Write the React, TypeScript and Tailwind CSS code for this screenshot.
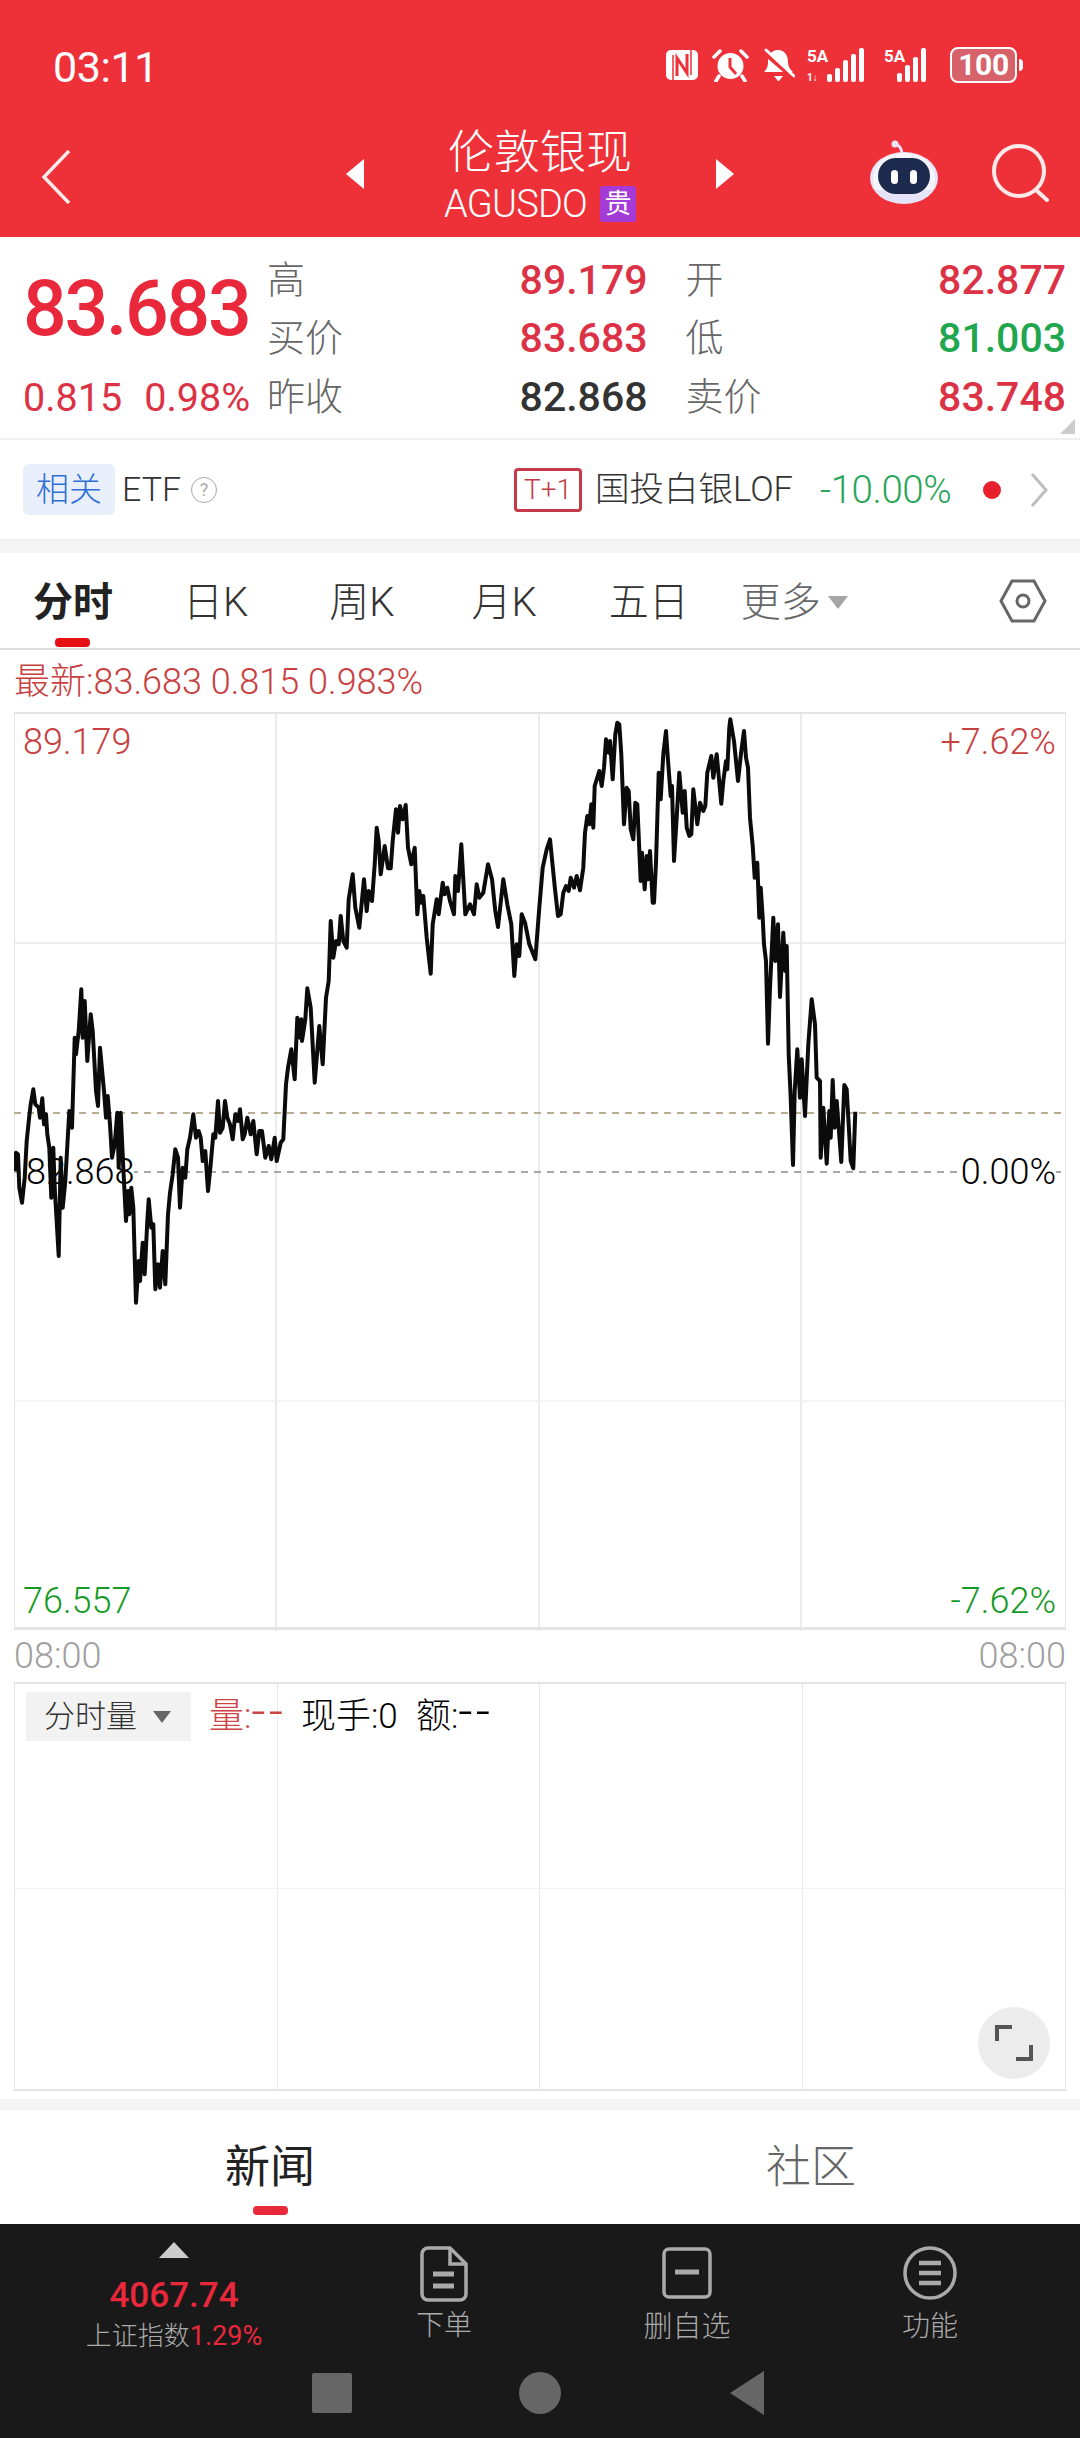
import type { ReactNode } from "react";

type Segment = [number, number, number[]];

// price line traced from the chart, points are in 3x crop coords with their crop origin
const segments: Segment[] = [
  [10, 960, [14,630,18,575,24,580,28,680,36,725,44,650,50,540,58,465,62,430,70,385,76,430,86,440,90,470,97,412,102,490,108,460,112,520,118,560,124,710,130,560,134,680,146,885,152,590,158,740,166,660,178,450,186,500,194,230,198,280,206,210,214,85,218,230,224,120,232,300,242,160,248,210,258,390,264,435,270,260,282,390,288,470,293,405,300,490,306,590,314,550,322,455,326,620,332,455,340,620,348,780,354,690,358,760,364,680,370,740,378,1025,386,900,390,960,398,845,404,940,412,780,416,715,424,800,430,790,436,985,444,910,450,980,458,870,466,970,474,760,480,695,488,640,496,565,504,590,510,740,518,620,526,650,532,565,540,530,550,460,558,530,566,510,572,530,578,600,586,570,594,690,602,610,610,520,616,530,624,420,630,515,638,500,645,420,652,470,660,490,668,535,676,460,684,480,690,445,698,535,704,520,712,470,722,520,730,480,740,580,748,510,756,510,766,590,776,555,784,595,794,530,800,600,812,545,820,535,828,370,834,320,844,265,854,355,862,170,870,230,874,175,876,240,886,175]],
  [270, 780, [112,622,122,680,134,905,148,735,158,850,168,650,176,600,182,420,190,530,198,480,206,490,212,405,220,480,230,500,236,355,248,280,256,380,268,440,282,295,290,390,296,330,306,360,314,250,320,140,326,180,332,280,344,195,354,262,362,262,368,180,378,85,384,155,390,75,398,115,407,72,414,200,424,250,434,200,442,400,448,330,454,365,460,345,470,470,482,578,488,430,500,355,506,400,518,305,524,340,532,320,540,360,552,400,556,285,564,330,574,190,586,400,600,370,612,400,620,310,628,350,640,335,654,250,666,295,676,390,684,438,700,295,712,370,724,430,733,585,740,490,748,525,755,400,765,425,778,490,796,535,808,380,818,260,830,205]],
  [530, 710, [60,385,75,535,84,615,92,610,100,545,108,525,116,540,122,500,132,530,140,495,150,538,160,470,165,365,172,315,178,340,184,280,190,350,194,225,208,180,215,225,222,170,228,85,236,125,240,90,248,205,256,70,262,35,268,40,274,130,282,340,290,230,296,240,302,355,310,385,316,275,322,280,332,510,336,425,344,535,350,435,354,505,360,420,368,575,372,575,378,455,386,185,392,265,400,130,408,60,412,120,422,255,426,225,432,450,440,320,448,185,458,305,464,240,470,350,478,375,484,370,490,235,502,340,510,275,520,300,526,285,532,185,544,135,550,200,560,130,574,278,580,210,588,150,592,175,598,50,601,25,612,90,624,210,634,120,642,60,648,140,654,170,660,320,668,405,674,500,682,455,688,620,692,530,698,620]],
  [700, 880, [192,190,198,240,204,488,210,320,220,110,226,240,234,130,240,348,250,155,256,270,260,195,266,520,272,650,279,852,284,630,292,505,300,650,305,535,315,705,325,490,335,355,345,430,350,590,360,600,362,830,370,680,380,848,388,690,392,770,398,597,404,740,410,660,424,843,433,612,440,625,452,840,460,862,466,692]],
];

function pricePath() {
  const out: string[] = [];
  for (const [ox, oy, pts] of segments) {
    for (let i = 0; i < pts.length; i += 2) {
      const x = (pts[i] / 3 + ox).toFixed(1);
      const y = (pts[i + 1] / 3 + oy).toFixed(1);
      out.push(`${out.length ? "L" : "M"}${x} ${y}`);
    }
  }
  return out.join("");
}

function SignalBars({ five }: { five?: boolean }) {
  const bars = five ? [[0, 8], [8, 14], [16, 22], [24, 28], [32, 34]] : [[0, 9], [8, 17], [16, 25], [24, 34]];
  return (
    <svg width={five ? 63 : 52} height="36" viewBox={five ? "0 0 63 36" : "0 0 52 36"} fill="white">
      <text x="0" y="15" fontSize="17" fontWeight="700" fontFamily="Roboto">5A</text>
      {five && <text x="0" y="34" fontSize="10" fontWeight="700" fontFamily="Roboto">1↓</text>}
      {bars.map(([x, h], i) => (
        <rect key={i} x={(five ? 20 : 13) + x} y={35 - h} width="5" height={h} rx="2" />
      ))}
    </svg>
  );
}

function StatusIcons() {
  return (
    <div className="flex items-center">
      <svg width="32" height="30" viewBox="0 0 32 30">
        <rect width="32" height="30" rx="5" fill="white" />
        <path d="M7 30V5M25 25V0" stroke="#ee3139" strokeWidth="1.5" />
        <path d="M11 26V8l10 15V4" fill="none" stroke="#ee3139" strokeWidth="3" />
      </svg>
      <svg className="ml-[14px]" width="37" height="34" viewBox="0 0 37 34">
        <circle cx="18.5" cy="18" r="13" fill="white" />
        <path d="M18 10v9l6 7" fill="none" stroke="#ee3139" strokeWidth="3" />
        <path d="M2 9 8 3M35 9 29 3M7 28l-3 5M30 28l3 5" stroke="white" strokeWidth="3.5" strokeLinecap="round" />
      </svg>
      <svg className="ml-[14px]" width="32" height="34" viewBox="0 0 32 34">
        <path d="M15 2c7 0 10 6 10 12 0 5 3 8 5 10H1c3-3 4-6 4-10C5 8 8 2 15 2Z" fill="white" />
        <path d="M11 28h9l-4 5h-1Z" fill="white" />
        <path d="M1 4l30 26" stroke="#ee3139" strokeWidth="5" />
        <path d="M3 2l28 26" stroke="white" strokeWidth="3" strokeLinecap="round" />
      </svg>
      <div className="ml-[12px]">
        <SignalBars five />
      </div>
      <div className="ml-[14px]">
        <SignalBars />
      </div>
      <div className="ml-[14px] flex items-center">
        <div className="w-[67px] h-[36px] rounded-[8px] border-2 border-white bg-[#d6626a] text-white text-[30px] leading-[32px] font-bold text-center tracking-[-0.01em]">
          100
        </div>
        <div className="ml-[2px] w-[4px] h-[12px] rounded-r bg-white" />
      </div>
    </div>
  );
}

function RobotIcon() {
  return (
    <svg width="70" height="64" viewBox="0 0 70 64">
      <path d="M33 14c0-5-2-8-6-10" fill="none" stroke="#e9e4f7" strokeWidth="3" />
      <circle cx="26" cy="4" r="3.5" fill="#e9e4f7" />
      <ellipse cx="35" cy="38" rx="34" ry="26" fill="#e6e3f8" />
      <path d="M4 40C4 22 18 13 35 13s31 9 31 27c0 4-1 7-3 10H7c-2-3-3-6-3-10Z" fill="#f6f4fd" />
      <rect x="9" y="18" width="52" height="36" rx="18" fill="#1c2a4d" />
      <rect x="22" y="30" width="7" height="14" rx="3.5" fill="white" />
      <rect x="41" y="30" width="7" height="14" rx="3.5" fill="white" />
    </svg>
  );
}

function Header() {
  return (
    <header className="h-[237px] bg-[#ee3139] text-white">
      <div className="h-[120px] pt-[47px] pl-[53px] pr-[57px] flex items-start justify-between">
        <div className="text-[43px] leading-[40px] tracking-[-0.01em]">03:11</div>
        <StatusIcons />
      </div>
      <div className="grid grid-cols-[1fr_auto_1fr] items-start">
        <svg className="ml-[41px] mt-[30px]" width="30" height="54" viewBox="0 0 30 54">
          <path d="M28 1 3 27l25 26" fill="none" stroke="#ffe9e9" strokeWidth="3.5" />
        </svg>
        <div className="flex items-center">
          <div className="w-0 h-0 border-y-[15px] border-y-transparent border-r-[18px] border-r-white mt-[6px]" />
          <div className="w-[352px] flex flex-col items-center">
            <div className="mt-[6px] text-[46px] leading-[52px] font-light">伦敦银现</div>
            <div className="flex items-center mt-[8px]">
              <span className="text-[38px] leading-[36px] font-light tracking-[-0.02em]">AGUSDO</span>
              <span className="ml-[13px] w-[36px] h-[36px] rounded-[3px] bg-[#a53bd6] text-[27px] leading-[36px] text-center">贵</span>
            </div>
          </div>
          <div className="w-0 h-0 border-y-[15px] border-y-transparent border-l-[18px] border-l-white mt-[6px]" />
        </div>
        <div className="flex justify-end items-start pr-[29px] mt-[20px]">
          <RobotIcon />
          <svg className="ml-[52px] mt-[4px]" width="60" height="58" viewBox="0 0 60 58">
            <circle cx="28" cy="27" r="25" fill="none" stroke="#ffe9e9" strokeWidth="4" />
            <path d="M45 46l11 10" stroke="#ffe9e9" strokeWidth="4" strokeLinecap="round" />
          </svg>
        </div>
      </div>
    </header>
  );
}

function QuoteCell({ label, value, tone }: { label: string; value: string; tone: string }) {
  return (
    <div className="h-[58.5px] flex items-center justify-between">
      <span className="text-[38px] text-[#666666] font-light">{label}</span>
      <span className={`text-[41px] font-medium ${tone}`}>{value}</span>
    </div>
  );
}

function QuotePanel() {
  return (
    <section className="relative h-[203px] pt-[14px] flex border-b-2 border-[#efefef]">
      <div className="w-[267px] pl-[23px] shrink-0">
        <div className="h-[117px] flex items-center text-[77px] font-medium text-[#e9283c] tracking-[-0.03em]">83.683</div>
        <div className="h-[58.5px] flex items-center text-[39.5px] text-[#dc3245] font-normal whitespace-nowrap">
          <span>0.815</span>
          <span className="ml-[22px]">0.98%</span>
        </div>
      </div>
      <div className="w-[799px] grid grid-cols-2 gap-x-[38px] content-start">
        <QuoteCell label="高" value="89.179" tone="text-[#dc3245]" />
        <QuoteCell label="开" value="82.877" tone="text-[#dc3245]" />
        <QuoteCell label="买价" value="83.683" tone="text-[#dc3245]" />
        <QuoteCell label="低" value="81.003" tone="text-[#1fa64e]" />
        <QuoteCell label="昨收" value="82.868" tone="text-[#333333]" />
        <QuoteCell label="卖价" value="83.748" tone="text-[#dc3245]" />
      </div>
      <div className="absolute right-[5px] bottom-[4px] w-0 h-0 border-b-[15px] border-b-[#cccccc] border-l-[15px] border-l-transparent" />
    </section>
  );
}

function EtfRow() {
  return (
    <section className="h-[99px] flex items-center pl-[23px]">
      <div className="w-[92px] h-[51px] rounded-[6px] bg-[#e8effa] text-[#2f6fd6] text-[33px] leading-[51px] text-center font-light">相关</div>
      <span className="ml-[7px] text-[34px] text-[#333333] font-light">ETF</span>
      <div className="ml-[10px] w-[26px] h-[26px] rounded-full border border-[#a8a8a8] text-[#a8a8a8] text-[18px] leading-[24px] text-center">?</div>
      <div className="ml-[297px] w-[68px] h-[44px] border-[3px] border-[#c53a48] rounded-[4px] text-[#c53a48] text-[28px] leading-[38px] text-center font-light">T+1</div>
      <span className="ml-[13px] text-[34.5px] text-[#333333] font-light whitespace-nowrap">国投白银LOF</span>
      <span className="ml-[27px] text-[38.5px] text-[#2aa55a] font-light whitespace-nowrap tracking-[-0.01em]">-10.00%</span>
      <div className="ml-[32px] w-[18px] h-[18px] rounded-full bg-[#e8202e]" />
      <svg className="ml-[29px]" width="18" height="34" viewBox="0 0 18 34">
        <path d="M2 1l14 16L2 33" fill="none" stroke="#bdbdbd" strokeWidth="3" />
      </svg>
    </section>
  );
}

function TabText({ children, className }: { children: ReactNode; className: string }) {
  return <span className={`text-[40px] leading-none whitespace-nowrap ${className}`}>{children}</span>;
}

function ChartTabs() {
  return (
    <section className="relative h-[97px] flex items-center pl-[33px] pt-[4px] border-b-2 border-[#dddddd]">
      <TabText className="font-bold text-[#222222]">分时</TabText>
      <TabText className="ml-[70px] text-[#333333] font-light">日K</TabText>
      <TabText className="ml-[81px] text-[#333333] font-light">周K</TabText>
      <TabText className="ml-[77px] text-[#333333] font-light">月K</TabText>
      <TabText className="ml-[72px] text-[#333333] font-light">五日</TabText>
      <TabText className="ml-[52px] text-[#666666] font-light">更多</TabText>
      <div className="ml-[7px] w-0 h-0 border-x-[10px] border-x-transparent border-t-[13px] border-t-[#a6a6a6]" />
      <svg className="ml-auto mr-[33px] -mt-[4px]" width="48" height="44" viewBox="0 0 48 44">
        <path d="M13 2h22l11 20-11 20H13L2 22Z" fill="none" stroke="#666666" strokeWidth="3" />
        <circle cx="24" cy="22" r="6" fill="none" stroke="#666666" strokeWidth="3" />
      </svg>
      <div className="absolute left-[55px] bottom-[1px] w-[35px] h-[9px] rounded-[4px] bg-[#e60f14]" />
    </section>
  );
}

function PriceChart() {
  const labelBase = "absolute text-[36px] leading-[36px] font-light";
  return (
    <div className="relative mx-[14px] h-[918px] border-t-2 border-x border-b-[3px] border-[#e4e4e4] box-border">
      <svg className="absolute -inset-px" width="1051" height="918" viewBox="14 712 1051 918">
        {[276, 539, 801].map((x) => (
          <path key={x} d={`M${x} 712V1630`} stroke="#e4e4e4" strokeWidth="1.5" />
        ))}
        <path d="M14 942H1065" stroke="#ededed" strokeWidth="2" />
        <path d="M14 1400H1065" stroke="#f1f1f1" strokeWidth="1.5" />
        <path d="M14 1112H1065" stroke="#b9ad94" strokeWidth="2" strokeDasharray="7 6" />
        <path d="M14 1171H1065" stroke="#a8a8a8" strokeWidth="2" strokeDasharray="7 6" />
      </svg>
      <span className={`${labelBase} left-[8px] top-[10px] text-[#c8403f]`}>89.179</span>
      <span className={`${labelBase} right-[9px] top-[10px] text-[#c8403f]`}>+7.62%</span>
      <span className={`${labelBase} left-[11px] top-[440px] bg-white text-black`}>82.868</span>
      <span className={`${labelBase} right-[9px] top-[440px] bg-white text-black pl-[3px]`}>0.00%</span>
      <span className={`${labelBase} left-[8px] top-[869px] text-[#169a26]`}>76.557</span>
      <span className={`${labelBase} right-[9px] top-[869px] text-[#169a26]`}>-7.62%</span>
      <svg className="absolute -inset-px" width="1051" height="918" viewBox="14 712 1051 918">
        <path d={pricePath()} fill="none" stroke="#0b0b0b" strokeWidth="4" strokeLinejoin="round" />
      </svg>
    </div>
  );
}

function VolumePanel() {
  return (
    <div className="relative mx-[14px] h-[409px] border-2 border-[#e4e4e4] border-x border-b-2 grid grid-cols-4">
      <div className="border-r border-[#e8e8e8]" />
      <div className="border-r border-[#e8e8e8]" />
      <div className="border-r border-[#e8e8e8]" />
      <div />
      <div className="absolute inset-x-0 top-[204px] h-px bg-[#f2f2f2]" />
      <div className="absolute left-[11px] top-[8px] flex items-center h-[49px] text-[35px] leading-none whitespace-nowrap">
        <div className="w-[165px] h-[49px] bg-[#f2f2f2] pl-[18px] flex items-center text-[#333333] font-light text-[31px]">
          分时量
          <div className="ml-[16px] w-0 h-0 border-x-[9px] border-x-transparent border-t-[12px] border-t-[#666666]" />
        </div>
        <span className="ml-[18px] w-[76px] text-[#cc4444] font-light">量:<span className="text-[50px] leading-[0] tracking-[3px]">--</span></span>
        <span className="ml-[16px] w-[96px] text-black font-light">现手:0</span>
        <span className="ml-[19px] text-black font-light">额:<span className="text-[50px] leading-[0] tracking-[3px]">--</span></span>
      </div>
      <div className="absolute right-[15px] bottom-[10px] w-[72px] h-[72px] rounded-full bg-[#ececec] flex items-center justify-center">
        <svg width="38" height="36" viewBox="0 0 38 36">
          <path d="M2 16V2h15M36 20v14H21" fill="none" stroke="#555555" strokeWidth="4" />
        </svg>
      </div>
    </div>
  );
}

function NewsTabs() {
  return (
    <section className="relative h-[114px] grid grid-cols-[540px_542px] pt-[2px] items-center text-center text-[45px]">
      <span className="text-[#222222] font-normal">新闻</span>
      <span className="text-[#666666] font-light">社区</span>
      <div className="absolute left-[253px] top-[96px] w-[35px] h-[9px] rounded-[4px] bg-[#e9283c]" />
    </section>
  );
}

function BottomBar() {
  const label = "text-[28px] leading-[32px] text-[#aaaaaa] font-light whitespace-nowrap";
  return (
    <footer className="h-[214px] bg-[#191919]">
      <div className="h-[124px] flex">
        <div className="w-[348px] flex flex-col items-center pt-[18px]">
          <div className="w-0 h-0 border-x-[15px] border-x-transparent border-b-[16px] border-b-[#cccccc]" />
          <div className="mt-[18px] text-[35px] leading-[40px] font-medium text-[#e9283c]">4067.74</div>
          <div className="mt-[5px] text-[26px] leading-[30px] text-[#aaaaaa] font-light whitespace-nowrap">
            上证指数<span className="text-[#e9283c] text-[27px] font-normal">1.29%</span>
          </div>
        </div>
        <div className="w-[192px] flex flex-col items-center pt-[22px]">
          <svg width="48" height="56" viewBox="0 0 48 56" fill="none" stroke="#aaaaaa" strokeWidth="3.5">
            <path d="M8 2h22l16 16v30a6 6 0 0 1-6 6H8a6 6 0 0 1-6-6V8a6 6 0 0 1 6-6Z" />
            <path d="M30 3v15h15" />
            <path d="M13 28h21M13 40h21" strokeWidth="5" />
          </svg>
          <span className={`${label} mt-[8px]`}>下单</span>
        </div>
        <div className="w-[294px] flex flex-col items-center pt-[23px]">
          <svg width="50" height="52" viewBox="0 0 50 52" fill="none" stroke="#aaaaaa" strokeWidth="3.5">
            <rect x="2" y="2" width="46" height="48" rx="5" />
            <path d="M13 25h24" strokeWidth="5" />
          </svg>
          <span className={`${label} text-[29px] mt-[12px]`}>删自选</span>
        </div>
        <div className="w-[192px] flex flex-col items-center pt-[22px]">
          <svg width="54" height="54" viewBox="0 0 54 54" fill="none" stroke="#aaaaaa" strokeWidth="3.5">
            <circle cx="27" cy="27" r="25" />
            <path d="M16 17h22M16 27h22M16 37h22" strokeWidth="4.5" />
          </svg>
          <span className={`${label} mt-[11px]`}>功能</span>
        </div>
      </div>
      <div className="h-[90px] flex items-center pl-[312px]">
        <div className="w-[40px] h-[40px] rounded-[2px] bg-[#666666]" />
        <div className="ml-[167px] w-[42px] h-[42px] rounded-full bg-[#666666]" />
        <svg className="ml-[169px]" width="34" height="44" viewBox="0 0 34 44">
          <path d="M34 0v44L0 22Z" fill="#666666" />
        </svg>
      </div>
    </footer>
  );
}

export default function App() {
  return (
    <div className="w-[1080px] h-[2438px] overflow-hidden bg-white font-['Roboto','Noto_Sans_CJK_SC',sans-serif]">
      <Header />
      <QuotePanel />
      <EtfRow />
      <div className="h-[14px] bg-[#f5f5f5] border-t-2 border-[#eeeeee]" />
      <ChartTabs />
      <div className="h-[62px] pl-[14px] flex items-center pt-[1px] text-[36px] text-[#c8403f] font-light whitespace-nowrap">
        最新:83.683 0.815 0.983%
      </div>
      <PriceChart />
      <div className="h-[52px] px-[14px] flex items-center justify-between text-[36px] font-light text-[#a0a0a0]">
        <span>08:00</span>
        <span>08:00</span>
      </div>
      <VolumePanel />
      <div className="h-[8px]" />
      <div className="h-[11px] bg-[#f5f5f5]" />
      <NewsTabs />
      <BottomBar />
    </div>
  );
}
